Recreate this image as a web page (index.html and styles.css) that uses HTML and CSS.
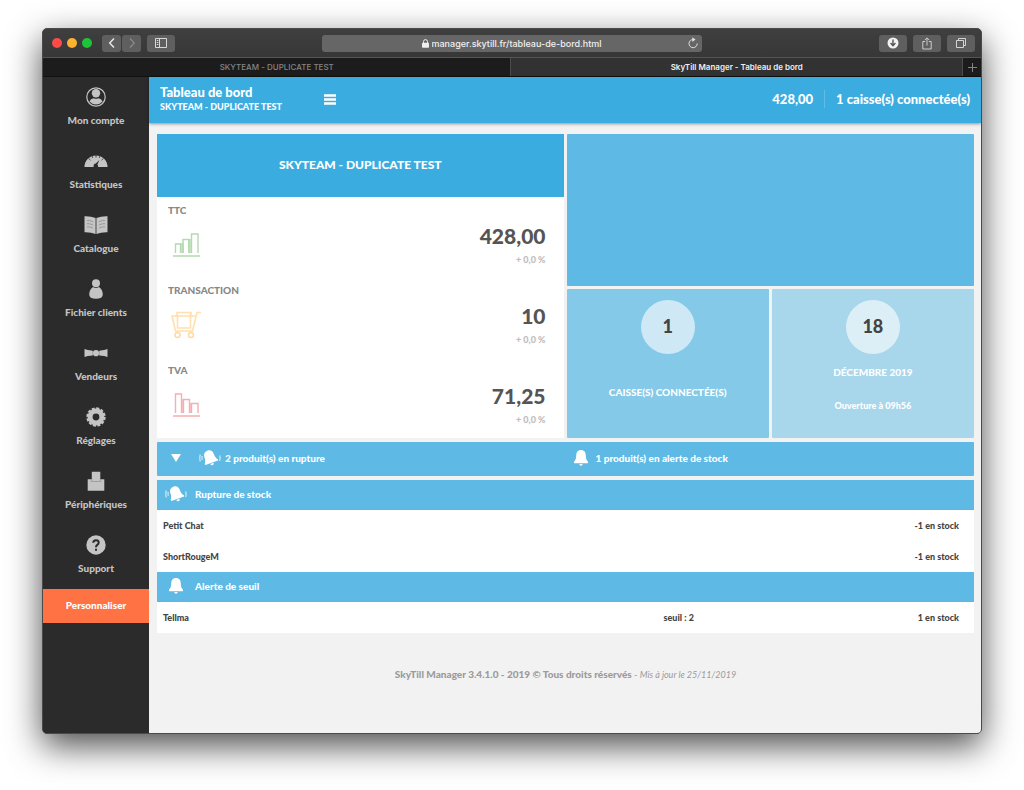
FILE: index.html
```html
<!DOCTYPE html>
<html lang="fr">
<head>
<meta charset="utf-8">
<meta name="viewport" content="width=device-width, initial-scale=1">
<title>SkyTill Manager - Tableau de bord</title>
<link rel="stylesheet" href="styles.css">
</head>
<body>
<svg class="sprite" aria-hidden="true">
  <symbol id="bell" viewBox="0 0 16 18">
    <path d="M8 1C4.600 1 3.300 3.400 3.200 6.500C3.100 9.500 2.700 11 .8 13.100L1.200 14.200H14.800L15.200 13.100C13.300 11 12.900 9.500 12.800 6.500C12.700 3.400 11.400 1 8 1ZM6.300 15H9.700Q9.500 16.800 8 16.800T6.300 15Z"/>
  </symbol>
  <symbol id="bell-ring" viewBox="0 0 22 18">
    <g transform="rotate(-20 11 9)"><path d="M11 1.200C7.600 1.200 6.100 3.600 6 6.700C5.900 9.500 5.500 11 3.900 12.900L4.300 14H17.700L18.100 12.900C16.500 11 16.100 9.500 16 6.700C15.900 3.600 14.400 1.200 11 1.200ZM9.200 14.700H12.800Q12.600 16.700 11 16.700T9.200 14.700Z"/></g>
    <path d="M1.300 5.500Q.3 9 1.300 12.500M3.300 7Q2.700 9 3.300 11M20.600 6.500Q21.600 9 20.600 12" fill="none" stroke="#fff" stroke-opacity=".7" stroke-width="1.200"/>
  </symbol>
</svg>
<div class="window">
  <div class="toolbar">
    <div class="tools">
      <div class="lights"><i class="light red"></i><i class="light yellow"></i><i class="light green"></i></div>
      <div class="history">
        <button class="tool narrow" aria-label="Précédent"><svg width="12" height="12" viewBox="0 0 12 12"><path d="M8 1.500L3.700 6L8 10.500" stroke="#e6e6e6" stroke-width="1.500"/></svg></button>
        <button class="tool narrow" aria-label="Suivant"><svg width="12" height="12" viewBox="0 0 12 12"><path d="M4 1.500L8.300 6L4 10.500" stroke="#8b8b8b" stroke-width="1.200"/></svg></button>
      </div>
      <button class="tool" aria-label="Barre latérale"><svg width="12" height="10" viewBox="0 0 12 10"><path d="M.5.5H11.500V9.500H.5ZM4.500.5V9.500M1.800 2.500H3.400M1.800 4.500H3.400M1.800 6.500H3.400" stroke="#d8d8d8"/></svg></button>
    </div>
    <div class="address">
      <svg width="7" height="9" viewBox="0 0 7 9"><path d="M1.500 4V2.600A2 2 0 0 1 5.500 2.600V4" stroke="#eee"/><rect y="3.800" width="7" height="5" rx=".8" fill="#eee"/></svg>
      <input class="url" type="text" aria-label="Adresse" value="manager.skytill.fr/tableau-de-bord.html">
      <button class="reload" aria-label="Recharger"><svg width="10" height="12" viewBox="0 0 10 12"><path d="M9.200 6.500A4.100 4.100 0 1 1 5.300 2.500" stroke="#ddd"/><path d="M4.300.2L7.600 2.600L4.300 5Z" fill="#ddd"/></svg></button>
    </div>
    <div class="tools end">
      <button class="tool" aria-label="Téléchargements"><svg width="12" height="12" viewBox="0 0 12 12"><circle cx="6" cy="6" r="5.500" fill="#f2f2f2"/><path d="M6 2.500V8M3.600 6L6 8.600L8.400 6" stroke="#555" stroke-width="1.400"/></svg></button>
      <button class="tool" aria-label="Partager"><svg width="10" height="13" viewBox="0 0 10 13"><path d="M3.200 4.500H.8V12H9.200V4.500H6.800M5 8.500V1M2.800 3.100L5 .9L7.200 3.100" stroke="#ccc"/></svg></button>
      <button class="tool" aria-label="Onglets"><svg width="10" height="10" viewBox="0 0 10 10"><path d="M.5 2.500H7.500V9.500H.5ZM2.500 2.500V.5H9.500V7.500H7.500" stroke="#d4d4d4"/></svg></button>
    </div>
  </div>
  <div class="tabs">
    <button class="tab">SKYTEAM - DUPLICATE TEST</button>
    <button class="tab active">SkyTill Manager - Tableau de bord</button>
    <button class="tab-add" aria-label="Nouvel onglet"><svg width="9" height="9" viewBox="0 0 9 9"><path d="M4.500 0V9M0 4.500H9" stroke="#858585"/></svg></button>
  </div>

  <div class="app">
    <nav class="sidebar">
      <a class="nav-item" href="#compte"><svg viewBox="0 0 24 24"><circle cx="12" cy="12" r="9.200" fill="none" stroke="#c4c4c4" stroke-width="1.200"/><circle cx="12" cy="8.300" r="4.200"/><path d="M5.500 16.600Q6.500 13.600 9.500 13.200Q12 14.500 14.500 13.200Q17.500 13.600 18.500 16.600Q16 19.500 12 19.500T5.500 16.600Z"/></svg>Mon compte</a>
      <a class="nav-item" href="#stats"><svg viewBox="0 0 24 24"><path d="M.5 18A11.500 11.500 0 0 1 23.500 18H14A2.100 2.100 0 0 0 13.400 15.500L15.500 11L11.800 14.600A2.300 2.300 0 0 0 9.800 18Z"/><path d="M12 6V8.500M4.600 9.500L6.500 11.200M19.400 9.500L17.500 11.200M8 7L8.800 9M16 7L15.200 9" stroke="#2b2b2b" stroke-width=".8"/></svg>Statistiques</a>
      <a class="nav-item" href="#catalogue"><svg viewBox="0 0 24 24"><path d="M.5 3.200Q7 3 11.600 5V21Q7 19 .5 19.200ZM23.500 3.200Q17 3 12.400 5V21Q17 19 23.500 19.200Z"/><path d="M3 7.500Q5 7 9 8.700M3 10.700Q5 10.200 9 11.900M3 13.900Q5 13.400 9 15.100M21 7.500Q19 7 15 8.700M21 10.700Q19 10.200 15 11.900M21 13.900Q19 13.400 15 15.100" fill="none" stroke="#888" stroke-width=".7"/></svg>Catalogue</a>
      <a class="nav-item" href="#clients"><svg viewBox="0 0 24 24"><circle cx="12" cy="6.200" r="4"/><path d="M9 9.900Q12 12 15 9.900Q18.800 12.500 18.800 17.500Q18.800 21.700 12 21.700T5.200 17.500Q5.200 12.500 9 9.900Z"/></svg>Fichier clients</a>
      <a class="nav-item" href="#vendeurs"><svg viewBox="0 0 24 24"><path d="M.5 8Q3 9.200 8.800 9.800V14.600Q3 15 .5 16ZM23.500 8Q21 9.200 15.200 9.800V14.600Q21 15 23.500 16Z"/><circle cx="12" cy="12.200" r="3.100"/></svg>Vendeurs</a>
      <a class="nav-item" href="#reglages"><svg viewBox="0 0 24 24"><circle cx="12" cy="12" r="5.900" fill="none" stroke="#c4c4c4" stroke-width="5"/><circle cx="12" cy="12" r="8.700" fill="none" stroke="#c4c4c4" stroke-width="2" stroke-dasharray="3.050 1.500"/></svg>Réglages</a>
      <a class="nav-item" href="#peripheriques"><svg viewBox="0 0 24 24"><path d="M7.800 2.700H16.300V10.300H20.300V21.700H3.700V10.300H7.800Z"/><path d="M6.500 12.500H17.500M7.800 10V12M16.300 10V12" stroke="#8a8a8a" stroke-width=".6"/></svg>Périphériques</a>
      <a class="nav-item" href="#support"><svg viewBox="0 0 24 24"><circle cx="12" cy="12" r="9.700"/><path d="M9.300 9.700Q9.300 7.200 12 7.200T14.700 9.600Q14.700 10.900 13.300 11.800Q12 12.600 12 14.200M12 15.800V17.800" fill="none" stroke="#2b2b2b" stroke-width="2"/></svg>Support</a>
      <a class="customize" href="#personnaliser">Personnaliser</a>
    </nav>

    <div class="page">
      <header class="header">
        <div class="titles">
          <h1 class="title">Tableau de bord</h1>
          <div class="subtitle">SKYTEAM - DUPLICATE TEST</div>
        </div>
        <button class="menu" aria-label="Menu"><svg width="12" height="12" viewBox="0 0 12 12"><path d="M0 1.500H12M0 5.500H12M0 9.500H12" stroke="#fff" stroke-width="2.600"/></svg></button>
        <div class="status"><span class="total">428,00</span><span>1 caisse(s) connectée(s)</span></div>
      </header>

      <main class="content">
        <div class="board">
          <section class="sales">
            <h2 class="sales-title">SKYTEAM - DUPLICATE TEST</h2>
            <div class="metric">
              <h3 class="metric-label">TTC</h3>
              <svg class="metric-icon" viewBox="0 0 32 28"><g fill="#c6e6c2"><path d="M9 12H13V22H9ZM17 8H21V22H17Z"/></g><path d="M4.500 22V13H9.500V22M12 22V8.500H18V22M20.500 22V3H27V22M2 25H29" stroke="#b2d9b0" stroke-width="1.400"/></svg>
              <div class="metric-value">428,00</div>
              <div class="metric-change">+ 0,0 %</div>
            </div>
            <div class="metric">
              <h3 class="metric-label">TRANSACTION</h3>
              <svg class="metric-icon" viewBox="0 0 32 28"><path d="M30 1.500H26L21.500 20H4.500L1 5H24M6 5V1.500H20V5M6.500 5V17H19.500V2" stroke="#ffe0ae" stroke-width="1.600"/><circle cx="6.500" cy="24" r="2.500" stroke="#ffd9a0" stroke-width="1.500"/><circle cx="20" cy="24" r="2.500" stroke="#ffd9a0" stroke-width="1.500"/></svg>
              <div class="metric-value">10</div>
              <div class="metric-change">+ 0,0 %</div>
            </div>
            <div class="metric">
              <h3 class="metric-label">TVA</h3>
              <svg class="metric-icon" viewBox="0 0 32 28"><g fill="#f8c5c7"><path d="M10 8H13V22H10ZM18 12H21V22H18Z"/></g><path d="M4.500 22V3H10.500V22M12.500 22V8.500H18.500V22M20.500 22V12.500H27V22M2 25H29" stroke="#f3b0b3" stroke-width="1.400"/></svg>
              <div class="metric-value">71,25</div>
              <div class="metric-change">+ 0,0 %</div>
            </div>
          </section>
          <section class="chart"></section>
          <section class="tile tills">
            <div class="circle">1</div>
            <div class="tile-text">CAISSE(S) CONNECTÉE(S)</div>
          </section>
          <section class="tile day">
            <div class="circle">18</div>
            <div class="tile-text">DÉCEMBRE 2019</div>
            <div class="tile-note">Ouverture à 09h56</div>
          </section>
        </div>

        <button class="alerts">
          <span class="alert"><svg class="arrow" width="10" height="8" viewBox="0 0 10 8"><path d="M0 0H10L5 8Z"/></svg><svg width="22" height="18"><use href="#bell-ring"/></svg>2 produit(s) en rupture</span>
          <span class="alert second"><svg width="16" height="18"><use href="#bell"/></svg>1 produit(s) en alerte de stock</span>
        </button>

        <section class="stock">
          <h2 class="stock-title"><svg width="22" height="18"><use href="#bell-ring"/></svg>Rupture de stock</h2>
          <table class="stock-table">
            <tr><td class="name">Petit Chat</td><td class="limit"></td><td class="qty">-1 en stock</td></tr>
            <tr><td class="name">ShortRougeM</td><td class="limit"></td><td class="qty">-1 en stock</td></tr>
          </table>
          <h2 class="stock-title"><svg width="22" height="18"><use href="#bell"/></svg>Alerte de seuil</h2>
          <table class="stock-table">
            <tr><td class="name">Tellma</td><td class="limit">seuil : 2</td><td class="qty">1 en stock</td></tr>
          </table>
        </section>

        <footer class="footer"><strong>SkyTill Manager 3.4.1.0 - 2019 © Tous droits réservés</strong> - <em>Mis à jour le 25/11/2019</em></footer>
      </main>
    </div>
  </div>
</div>
</body>
</html>
```

FILE: styles.css
```css
* { box-sizing: border-box; }

body {
  margin: 0;
  min-height: 100vh;
  padding: 28px 42px 56px;
  display: flex;
  background: #fff;
  font-family: Lato, "Open Sans", sans-serif;
  font-weight: 900;
}

h1, h2, h3 { margin: 0; font-weight: inherit; }

button, input { font: inherit; color: inherit; border: 0; padding: 0; background: none; }

a { color: inherit; text-decoration: none; }

svg { display: block; flex: none; fill: none; }

.sprite { position: absolute; width: 0; height: 0; }

.window {
  flex: 1;
  min-width: 0;
  display: flex;
  flex-direction: column;
  overflow: hidden;
  border: 1px solid #4a4a4a;
  border-radius: 5px;
  background: #2b2b2b;
  box-shadow: 0 12px 34px rgba(0, 0, 0, .7);
}

/* Browser chrome */
.toolbar {
  display: grid;
  grid-template-columns: 1fr minmax(0, 380px) 1fr;
  align-items: center;
  height: 29px;
  padding: 0 6px 0 5px;
  background: linear-gradient(#3f3f3f, #373737);
  border-bottom: 1px solid #555;
  font-family: Inter, Roboto, sans-serif;
  font-weight: 500;
}

.tools { display: flex; align-items: center; gap: 6px; }
.tools.end { justify-content: flex-end; }

.lights { display: flex; gap: 5px; margin: 0 4px; }
.light { width: 10px; height: 10px; border-radius: 50%; }
.red { background: #fc4b48; }
.yellow { background: #fdb32f; }
.green { background: #1ec337; }

.history { display: flex; gap: 1px; }

.tool {
  display: grid;
  place-items: center;
  width: 28px;
  height: 17px;
  border-radius: 3px;
  background: #5f5f5f;
}
.tool.narrow { width: 19px; }

.address {
  display: flex;
  align-items: center;
  gap: 3px;
  height: 17px;
  padding: 0 4px 0 17px;
  border-radius: 3px;
  background: #666;
  color: #f0f0f0;
  font-size: 9px;
}
.address > svg { margin-left: auto; }
.url { field-sizing: content; min-width: 0; line-height: 15px; outline: 0; }
.reload { margin-left: auto; }

.tabs {
  display: flex;
  height: 19px;
  border-bottom: 1px solid #111;
  background: #1c1c1c;
  font-family: Inter, Roboto, sans-serif;
  font-size: 8px;
  font-weight: 500;
}
.tab { flex: 468; color: #858585; }
.tab.active { flex: 451; background: #323232; border-left: 1px solid #4c4c4c; color: #eee; font-weight: 600; }
.tab-add { display: grid; place-items: center; width: 19px; border-left: 1px solid #4c4c4c; }

/* Application */
.app { flex: 1; display: flex; }

.sidebar {
  flex: none;
  width: 106px;
  background: #2b2b2b;
  color: #c4c4c4;
  font-size: 10px;
  text-align: center;
}

.nav-item {
  display: flex;
  flex-direction: column;
  align-items: center;
  gap: 4px;
  height: 64px;
  padding-top: 8px;
  line-height: 14px;
}
.nav-item svg { width: 24px; height: 24px; fill: #c4c4c4; }

.customize {
  display: block;
  padding-bottom: 2px;
  line-height: 32px;
  background: #ff7243;
  color: #fff;
}

.page { flex: 1; min-width: 0; background: #f2f2f2; }

.header {
  display: flex;
  align-items: center;
  height: 46px;
  padding: 0 11px 2px;
  background: #3aacdf;
  box-shadow: 0 1px 3px rgba(0, 0, 0, .4);
  color: #fff;
}
.titles { width: 164px; }
.title { font-size: 13px; line-height: 15px; }
.subtitle { font-size: 9px; line-height: 13px; }
.menu { padding-top: 2px; }
.status { display: flex; align-items: center; margin-left: auto; font-size: 13px; line-height: 18px; }
.total { padding-right: 11px; margin-right: 11px; border-right: 1px solid #61bce6; }

.content { padding: 11px 7px 0 8px; }

.board {
  display: grid;
  grid-template-columns: 2fr calc(25% - 2px) calc(25% - 2px);
  grid-template-rows: 152px 149px;
  gap: 3px;
}

.sales { grid-row: 1 / 3; background: #fff; color: #878787; }
.sales-title {
  height: 63px;
  line-height: 62px;
  background: #3aacdf;
  color: #fff;
  font-size: 12px;
  text-align: center;
}

.metric {
  display: grid;
  grid-template-columns: auto 1fr;
  grid-template-rows: 14px 24px 24px;
  height: 80px;
  padding: 6px 18px 0 11px;
}
.metric-label { grid-column: 1 / 3; font-size: 10px; line-height: 14px; }
.metric-icon { grid-row: 2 / 4; width: 32px; height: 28px; margin: 14px 0 0 3px; }
.metric-value { padding-top: 7px; color: #555; font-size: 21px; line-height: 24px; text-align: right; }
.metric-change { padding-top: 13px; color: #bdbdbd; font-size: 9px; line-height: 12px; text-align: right; }

.chart { grid-column: 2 / 4; border-radius: 1px; background: #5eb9e4; }

.tile { padding-top: 11px; border-radius: 1px; color: #fff; text-align: center; }
.tills { background: #84c9e7; }
.day { background: #a8d7ec; }
.circle {
  width: 54px;
  height: 54px;
  margin: 0 auto;
  border-radius: 50%;
  background: rgba(255, 255, 255, .6);
  color: #444;
  font-size: 18px;
  line-height: 52px;
}
.tile-text { font-size: 10px; line-height: 14px; }
.tills .tile-text { margin-top: 31px; }
.day .tile-text { margin-top: 11px; }
.tile-note { margin-top: 20px; font-size: 9px; line-height: 14px; }

.alerts {
  display: grid;
  grid-template-columns: 1fr 1fr;
  width: 100%;
  height: 34px;
  margin: 4px 0;
  padding-bottom: 2px;
  border-radius: 1px;
  background: #5eb9e4;
  color: #fff;
  font-size: 10px;
  text-align: left;
}
.alert { display: flex; align-items: center; gap: 4px; padding-left: 14px; }
.alert svg, .stock-title svg { fill: #fff; }
.alert .arrow { margin-right: 14px; }
.alert.second { gap: 7px; padding-left: 7px; }

.stock { background: #fff; }
.stock-title {
  display: flex;
  align-items: center;
  gap: 8px;
  height: 30px;
  padding: 0 8px 2px;
  background: #5eb9e4;
  color: #fff;
  font-size: 10px;
}
.stock-table {
  width: 100%;
  table-layout: fixed;
  border-collapse: collapse;
  color: #444;
  font-size: 9px;
}
.stock-table td { height: 31px; padding: 0 0 1px; }
.stock-table .name { width: 62%; padding-left: 6px; }
.stock-table .qty { padding-right: 15px; text-align: right; }

.footer {
  padding: 34px 0 20px;
  color: #9b9b9b;
  font-size: 9px;
  line-height: 14px;
  font-weight: 400;
  text-align: center;
}
.footer strong { font-size: 10px; font-weight: 900; }
```
